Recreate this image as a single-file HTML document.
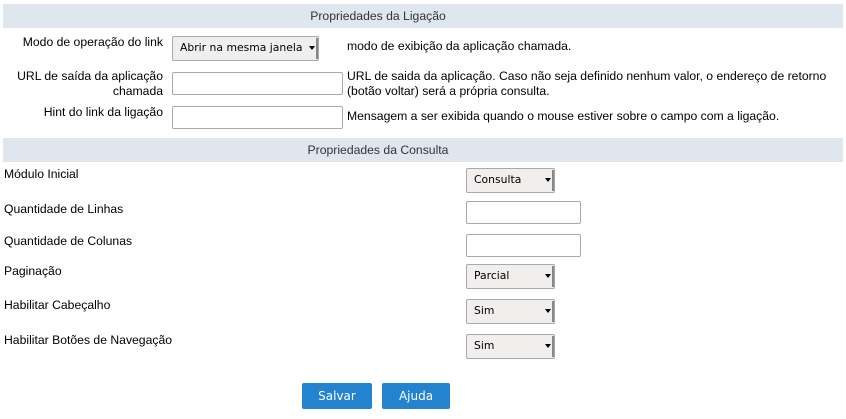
<!DOCTYPE html>
<html><head><meta charset="utf-8"><style>
body{margin:0;width:846px;height:419px;background:#fff;font-family:"Liberation Sans",Arial,sans-serif;font-size:12.2px;color:#000;position:relative;overflow:hidden}
.a{position:absolute;white-space:nowrap}
.hd{position:absolute;left:3px;width:840px;height:24px;background:#dfe6ee;color:#333;line-height:24px;font-size:12.2px;box-sizing:border-box}
.hd span{position:absolute;left:0;width:750px;text-align:center}
.in{position:absolute;border:1px solid #a9a9a9;border-radius:2px;background:#fff;box-sizing:border-box}
.sel{position:absolute;border:1px solid #a9a9a9;border-radius:2px;background:#f1efed;box-sizing:border-box;font-family:"DejaVu Sans",sans-serif;font-size:10.8px;padding-left:7px;line-height:22px}
.sel:after{content:"";position:absolute;right:3px;top:9px;border-left:3px solid transparent;border-right:3px solid transparent;border-top:4px solid #000}
.sel:before{content:"";position:absolute;right:0;top:1px;bottom:1px;width:2px;background:#888}
.r{text-align:right}
.btn{position:absolute;background:#2383cf;color:#fff;border-radius:2px;text-align:center;line-height:26px;font-family:"DejaVu Sans",sans-serif;font-size:12px;height:26px;top:383px}
</style></head><body>
<div class="hd" style="top:4px"><span>Propriedades da Ligação</span></div>
<div class="a r" style="right:683px;top:35px">Modo de operação do link</div>
<div class="sel" style="left:172px;top:36px;width:147px;height:25px">Abrir na mesma janela</div>
<div class="a" style="left:347px;top:39px">modo de exibição da aplicação chamada.</div>
<div class="a r" style="right:683px;top:69px;line-height:15px">URL de saída da aplicação<br>chamada</div>
<div class="in" style="left:172px;top:72px;width:171px;height:23px"></div>
<div class="a" style="left:347px;top:69px;line-height:15px">URL de saida da aplicação. Caso não seja definido nenhum valor, o endereço de retorno<br>(botão voltar) será a própria consulta.</div>
<div class="a r" style="right:683px;top:105px">Hint do link da ligação</div>
<div class="in" style="left:172px;top:106px;width:171px;height:23px"></div>
<div class="a" style="left:347px;top:109px">Mensagem a ser exibida quando o mouse estiver sobre o campo com a ligação.</div>
<div class="hd" style="top:138px"><span>Propriedades da Consulta</span></div>
<div class="a" style="left:4px;top:167px">Módulo Inicial</div>
<div class="sel" style="left:466px;top:168px;width:89px;height:25px">Consulta</div>
<div class="a" style="left:4px;top:202px">Quantidade de Linhas</div>
<div class="in" style="left:466px;top:201px;width:115px;height:23px"></div>
<div class="a" style="left:4px;top:234px">Quantidade de Colunas</div>
<div class="in" style="left:466px;top:234px;width:115px;height:23px"></div>
<div class="a" style="left:4px;top:264px">Paginação</div>
<div class="sel" style="left:466px;top:264px;width:89px;height:25px">Parcial</div>
<div class="a" style="left:4px;top:298px">Habilitar Cabeçalho</div>
<div class="sel" style="left:466px;top:299px;width:89px;height:25px">Sim</div>
<div class="a" style="left:4px;top:333px">Habilitar Botões de Navegação</div>
<div class="sel" style="left:466px;top:334px;width:89px;height:25px">Sim</div>
<div class="btn" style="left:302px;width:70px">Salvar</div>
<div class="btn" style="left:382px;width:68px">Ajuda</div>
</body></html>
